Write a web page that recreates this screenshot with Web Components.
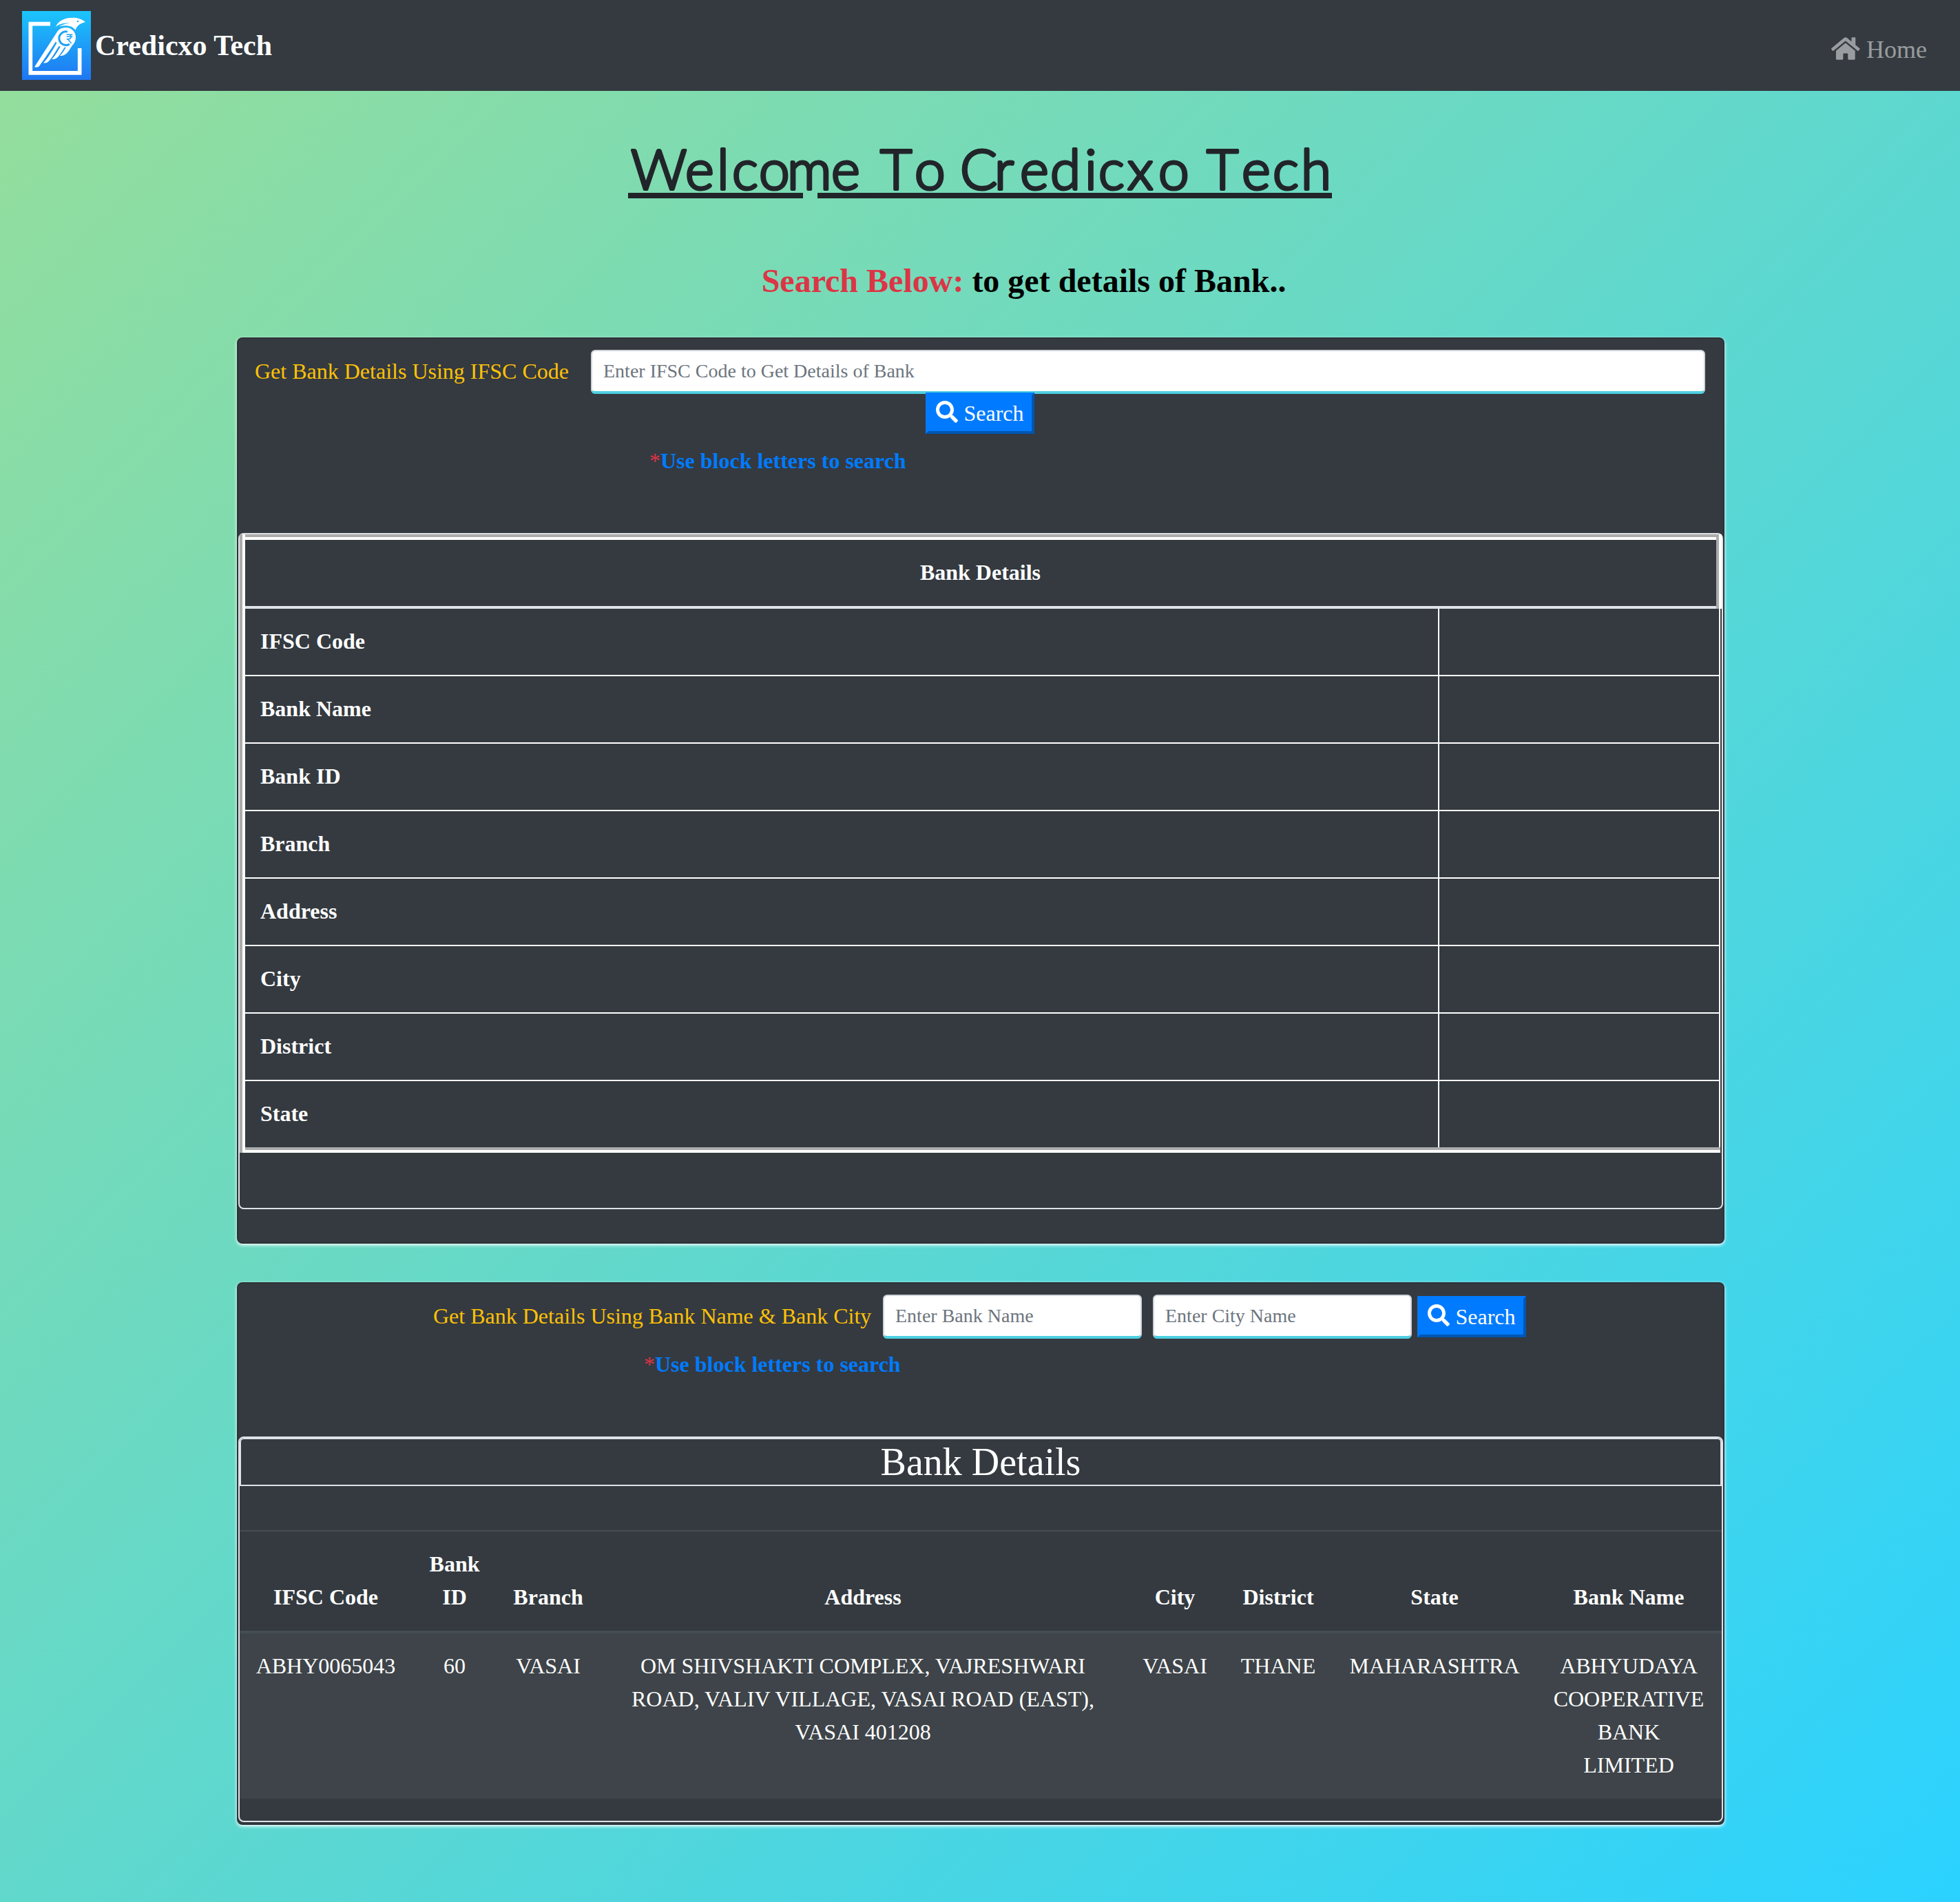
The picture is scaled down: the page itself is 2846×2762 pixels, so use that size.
<!DOCTYPE html>
<html lang="en">
<head>
<meta charset="utf-8">
<title>Credicxo Tech</title>
<style>
  html, body { margin: 0; padding: 0; }
  body {
    height: 2762px;
    overflow: hidden;
    font-family: "Liberation Serif", "Times New Roman", serif;
    font-size: 32px;
    line-height: 48px;
    color: #212529;
    background: linear-gradient(135deg, #96de9a, #2bd2ff);
  }
</style>
</head>
<body>
<credicxo-app></credicxo-app>
<script>
const define = (name, html) => customElements.define(name, class extends HTMLElement {
  constructor() {
    super();
    const t = document.createElement('template');
    t.innerHTML = html;
    this.attachShadow({ mode: 'open' }).append(t.content.cloneNode(true));
  }
});

define('credicxo-logo', `
<style>:host{display:block;width:100px;height:100px}svg{display:block}</style>
<svg width="100" height="100" viewBox="96 48 300 300">
  <defs><linearGradient id="g" x1="0" y1="0" x2="0" y2="1"><stop offset="0" stop-color="#1cc5fc"/><stop offset="1" stop-color="#1f76f2"/></linearGradient></defs>
  <rect x="96" y="48" width="300" height="300" fill="url(#g)"/>
  <path d="M219 104H133V317.500H347V210" fill="none" stroke="#fff" stroke-width="17"/>
  <path fill="#fff" d="M372 96C356 82 338 77 316 77C280 77 254 91 242 117C256 106 276 99 303 101C286 102 268 108 257 116C290 107 315 112 329 131C334 112 350 101 372 96Z"/>
  <circle cx="339" cy="93" r="4" fill="#1eb4fa"/>
  <path fill="#fff" d="M248 140C257 126 270 120 287 120C312 120 330 139 330 163C330 178 324 190 313 200C305 214 294 231 284 237C277 242 269 244 261 243C270 234 279 221 287 206L281 206C271 222 259 242 249 251C242 257 234 259 225 258C238 246 252 222 263 203L257 200C245 219 228 250 214 265C207 273 199 276 189 274C206 257 230 217 247 188L243 181C220 218 191 261 171 288C166 293 159 294 150 292Z"/>
  <path d="M294 138.500A29.500 29.500 0 1 0 303 192" fill="none" stroke="#1da4f8" stroke-width="9"/>
  <path d="M290 151H316M290 160H316M290 170H298C313 170 313 151 298 151M295 170L311 189" fill="none" stroke="#1da4f8" stroke-width="4.500"/>
</svg>`);

define('home-icon', `
<style>:host{display:block;width:41.6px;height:37px}svg{display:block}</style>
<svg width="41.6" height="37" viewBox="0 0 576 512" fill="currentColor"><path d="M280.370 148.260L96 300.110V464a16 16 0 0 0 16 16l112.060-.29a16 16 0 0 0 15.920-16V368a16 16 0 0 1 16-16h64a16 16 0 0 1 16 16v95.640a16 16 0 0 0 16 16.050L464 480a16 16 0 0 0 16-16V300L295.670 148.260a12.190 12.190 0 0 0-15.300 0zM571.600 251.470L488 182.560V44.050a12 12 0 0 0-12-12h-56a12 12 0 0 0-12 12v72.610L318.470 43a48 48 0 0 0-61 0L4.340 251.470a12 12 0 0 0-1.600 16.900l25.500 31A12 12 0 0 0 45.150 301l235.220-193.740a12.190 12.190 0 0 1 15.300 0L530.900 301a12 12 0 0 0 16.900-1.600l25.500-31a12 12 0 0 0-1.700-16.930z"/></svg>`);

define('nav-bar', `
<style>
:host{display:flex;justify-content:space-between;align-items:flex-start;box-sizing:border-box;height:132px;padding:16px 48px 16px 32px;background:#343a40}
.brand{display:flex;gap:6px;color:#fff;font-weight:700;font-size:42px;line-height:46px}
.brand span{padding-top:27px}
.link{display:flex;gap:9px;padding-top:36px;color:rgba(255,255,255,.5);font-size:36px;line-height:40px}
</style>
<div class="brand"><credicxo-logo></credicxo-logo><span><slot></slot></span></div>
<div class="link"><home-icon></home-icon><span>Home</span></div>`);

define('welcome-title', `
<style>:host{display:block}h1{margin:0;display:flex;justify-content:center}
svg{display:block;overflow:visible}
text{font-family:Lato,"Open Sans",sans-serif;font-weight:300;font-size:80px;fill:#212529;stroke:#212529;stroke-width:4px;stroke-linejoin:round}</style>
<h1><svg width="1080" height="140" viewBox="883 180 1080 140">
<text y="275" x="916 995 1041 1063 1102 1143 1207 1250 1278 1328 1370 1394 1444 1481 1525 1575 1595 1637 1682 1725 1752 1803 1848 1889">Welcome To Credicxo Tech</text>
<path d="M912 280H1166V288H912ZM1187 280H1934V288H1187Z" fill="#212529"/>
</svg></h1>`);

define('search-button', `
<style>:host{display:block}
button{box-sizing:border-box;display:flex;align-items:center;justify-content:center;gap:8px;width:158px;height:60px;margin:0;padding:0;border:4px solid;border-color:#007bff #0056b3 #0056b3 #007bff;border-radius:0;background:#007bff;color:#fff;font:32px/48px "Liberation Serif","Times New Roman",serif}
svg{flex:none;margin-top:-4px}span{margin-top:-1px}</style>
<button><svg width="32" height="32" viewBox="0 0 512 512" fill="currentColor"><path d="M505 442.700L405.300 343c-4.500-4.500-10.600-7-17-7H372c27.600-35.300 44-79.700 44-128C416 93.100 322.900 0 208 0S0 93.100 0 208s93.100 208 208 208c48.300 0 92.700-16.400 128-44v16.300c0 6.400 2.500 12.500 7 17l99.700 99.700c9.400 9.400 24.600 9.400 33.900 0l28.300-28.300c9.400-9.400 9.400-24.600.1-34zM208 336c-70.700 0-128-57.200-128-128 0-70.700 57.200-128 128-128 70.700 0 128 57.200 128 128 0 70.700-57.200 128-128 128z"/></svg><span>Search</span></button>`);

customElements.define('text-field', class extends HTMLElement {
  constructor() {
    super();
    this.attachShadow({ mode: 'open' }).innerHTML = `
<style>:host{display:block}
input{display:block;box-sizing:border-box;width:100%;height:64px;margin:0;padding:8px 16px;border:2px solid #ced4da;border-bottom:4px solid #4dd0e1;border-radius:6.4px;background:#fff;color:#495057;font:28px/42px "Liberation Serif","Times New Roman",serif;outline:0}
input::placeholder{color:#6c757d;opacity:1}</style><input type="text">`;
  }
  connectedCallback() {
    this.shadowRoot.querySelector('input').placeholder = this.getAttribute('placeholder');
  }
});

define('search-hint', `
<style>:host{display:block;font-weight:700;color:#007bff;white-space:nowrap;line-height:48px}i{font-style:normal;font-weight:400;color:#dc3545}</style>
<i>*</i>Use block letters to search`);

define('bank-card', `
<style>:host{display:flex;flex-direction:column;box-sizing:border-box;width:2160px;border:2px solid rgba(0,0,0,.125);border-radius:8px;background:#343a40;box-shadow:0 2px 5px #fff}</style>
<slot></slot>`);

define('result-panel', `
<style>:host{display:flex;flex-direction:column;box-sizing:border-box;border:2px solid #dee2e6;border-radius:8px;color:#fff}</style>
<slot></slot>`);

customElements.define('detail-table', class extends HTMLElement {
  constructor() {
    super();
    const rows = ['IFSC Code', 'Bank Name', 'Bank ID', 'Branch', 'Address', 'City', 'District', 'State'];
    this.attachShadow({ mode: 'open' }).innerHTML = `
<style>
:host{display:block;width:2152px;font-weight:700}
.left{border-left:4px solid #acacac}
.edge{border-left:4px solid #fff}
.head{border-right:4px solid #fff}
.rim{border-top:4px solid #acacac;border-right:4px solid #acacac}
.title{border-top:4px solid #fff;border-bottom:4px solid #dee2e6;padding:23px 1px 25px 0;text-align:center}
.body{width:2142px;box-sizing:border-box;border-right:2px solid #fff}
.row{display:flex}
.row+.row{border-top:2px solid #fff}
.name{box-sizing:border-box;width:1732px;padding:23px 22px 25px}
.value{flex:1;border-left:2px solid #fff}
.foot{width:2142px;height:4px;background:#acacac;border-bottom:4px solid #fff}
</style>
<div class="left"><div class="edge">
<div class="head"><div class="rim"><div class="title">Bank Details</div></div></div>
<div class="body">${rows.map(r => `<div class="row"><div class="name">${r}</div><div class="value"></div></div>`).join('')}</div>
<div class="foot"></div>
</div></div>`;
  }
});

customElements.define('bank-table', class extends HTMLElement {
  constructor() {
    super();
    const head = ['IFSC Code', 'Bank <br>ID', 'Branch', 'Address', 'City', 'District', 'State', 'Bank Name'];
    const data = ['ABHY0065043', '60', 'VASAI', 'OM SHIVSHAKTI COMPLEX, VAJRESHWARI <br>ROAD, VALIV VILLAGE, VASAI ROAD (EAST), <br>VASAI 401208', 'VASAI', 'THANE', 'MAHARASHTRA', 'ABHYUDAYA <br>COOPERATIVE <br>BANK <br>LIMITED'];
    this.attachShadow({ mode: 'open' }).innerHTML = `
<style>
:host{display:block}
.row{display:grid;grid-template-columns:250px 124px 148px 766px 140px 160px 294px 270px;text-align:center;white-space:nowrap;padding:23px 0 25px}
.row>div{display:flex;flex-direction:column;align-items:center}
.head{align-items:end;font-weight:700;border-top:2px solid #454d55;border-bottom:4px solid #454d55}
.data{background:rgba(255,255,255,.05)}
</style>
<div class="row head">${head.map(c => `<div><span>${c}</span></div>`).join('')}</div>
<div class="row data">${data.map(c => `<div><span>${c}</span></div>`).join('')}</div>`;
  }
});

define('credicxo-app', `
<style>
:host{display:block}
welcome-title{margin-top:48px}
.lead{margin:59px 0 53px;padding-left:127px;text-align:center;font-size:48px;line-height:58px;font-weight:700;color:#000}
.lead span{color:#dc3545}
bank-card{margin-left:344px}
.form{display:flex;align-items:center;color:#ffc107;padding-top:16px}
.form label{flex:none;padding-bottom:2px;white-space:nowrap}
.one{padding-left:24px;padding-right:26px}
.one label{width:488px}
.one text-field{flex:1}
.first search-button{margin:-2px 0 0 998px;width:158px}
.first search-hint{margin:15px 0 0 597px}
.first result-panel{margin:81px 0 48px}
.first detail-table{margin-bottom:80px}
.second{margin-top:56px}
.two{padding-left:283px}
.two label{width:653px}
.two text-field{width:376px}
.two text-field+text-field{margin-left:16px}
.two search-button{margin-left:8px}
.second search-hint{margin:13px 0 0 589px}
.second result-panel{margin:81px 0 2px}
h3{box-sizing:border-box;height:70px;margin:0 0 64px;border:2px solid #dee2e6;border-radius:6px 6px 0 0;text-align:center;font-size:56px;line-height:66px;font-weight:400}
bank-table{margin-bottom:32px}
</style>
<nav-bar>Credicxo Tech</nav-bar>
<welcome-title></welcome-title>
<div class="lead"><span>Search Below:</span> to get details of Bank..</div>
<bank-card class="first">
  <div class="form one"><label>Get Bank Details Using IFSC Code</label><text-field placeholder="Enter IFSC Code to Get Details of Bank"></text-field></div>
  <search-button></search-button>
  <search-hint></search-hint>
  <result-panel><detail-table></detail-table></result-panel>
</bank-card>
<bank-card class="second">
  <div class="form two"><label>Get Bank Details Using Bank Name &amp; Bank City</label><text-field placeholder="Enter Bank Name"></text-field><text-field placeholder="Enter City Name"></text-field><search-button></search-button></div>
  <search-hint></search-hint>
  <result-panel><h3>Bank Details</h3><bank-table></bank-table></result-panel>
</bank-card>`);
</script>
</body>
</html>
